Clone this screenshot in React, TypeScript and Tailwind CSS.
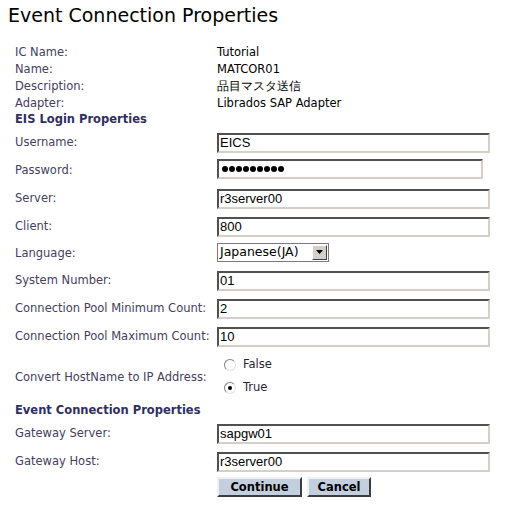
import React from 'react';

const labelFont = "font-['DejaVu_Sans','Verdana',sans-serif]";
const inputFont = "font-['Liberation_Sans','Arial',sans-serif]";

const infoRows = [
  { label: 'IC Name:', value: 'Tutorial' },
  { label: 'Name:', value: 'MATCOR01' },
  { label: 'Description:', value: '品目マスタ送信' },
  { label: 'Adapter:', value: 'Librados SAP Adapter' },
];

function TextBox({ value }: { value: string }) {
  return (
    <input
      readOnly
      defaultValue={value}
      className={`w-[273px] h-[20px] border-2 border-t-[#505050] border-l-[#505050] border-b-[#d4d0c8] border-r-[#d4d0c8] bg-white pl-[1px] text-[13px] text-black outline-none ${inputFont}`}
    />
  );
}

function PasswordBox() {
  return (
    <div className="w-[266px] h-[20px] border-2 border-t-[#505050] border-l-[#505050] border-b-[#d4d0c8] border-r-[#d4d0c8] bg-white flex items-center gap-[1px] pl-[3px]">
      {Array.from({ length: 9 }).map((_, i) => (
        <span key={i} className="w-[6px] h-[6px] rounded-full bg-black" />
      ))}
    </div>
  );
}

function LanguageSelect() {
  return (
    <div className="w-[112px] h-[19px] border border-[#7a7a7a] bg-white flex items-center justify-between">
      <span className={`pl-[2px] text-[12.5px] text-black ${labelFont}`}>Japanese(JA)</span>
      <span className="w-[15px] h-[15px] mr-[1px] bg-[#d4d0c8] border border-t-white border-l-white border-b-[#404040] border-r-[#404040] flex items-center justify-center">
        <svg width="7" height="4" viewBox="0 0 7 4">
          <path d="M0 0 L7 0 L3.5 4 Z" fill="#000" />
        </svg>
      </span>
    </div>
  );
}

function Radio({ checked, label }: { checked: boolean; label: string }) {
  return (
    <div className="h-[23px] flex items-center pl-[7px] gap-[7px]">
      <span className="w-[12px] h-[12px] rounded-full border border-t-[#808080] border-l-[#808080] border-b-[#e4e2dc] border-r-[#e4e2dc] bg-white flex items-center justify-center">
        {checked && <span className="w-[4px] h-[4px] rounded-full bg-black" />}
      </span>
      <span className={`pt-[1px] text-[11.5px] text-[#2a1d3d] ${labelFont}`}>{label}</span>
    </div>
  );
}

function Row({ label, children, h = 'h-[28px]' }: { label: string; children: React.ReactNode; h?: string }) {
  return (
    <div className={`flex items-center ${h}`}>
      <div className={`w-[202px] pt-[3px] text-[11.5px] text-[#45405e] ${labelFont}`}>{label}</div>
      <div>{children}</div>
    </div>
  );
}

function Button({ children, w }: { children: React.ReactNode; w: string }) {
  return (
    <button
      className={`${w} h-[20px] bg-[#c3cfdf] border-2 border-t-[#eef2f7] border-l-[#eef2f7] border-b-[#3c3c3c] border-r-[#3c3c3c] text-[11.5px] font-bold text-black ${labelFont}`}
    >
      {children}
    </button>
  );
}

export default function App() {
  return (
    <div className="w-[511px] h-[511px] bg-white px-[8px] overflow-hidden">
      <h1 className={`h-[44px] pt-[3px] text-[19px] text-black leading-[24px] ${labelFont}`}>
        Event Connection Properties
      </h1>

      <div className="ml-[7px]">
        {infoRows.map((r) => (
          <div key={r.label} className="flex items-center h-[17px]">
            <div className={`w-[202px] text-[11.5px] text-[#45405e] ${labelFont}`}>{r.label}</div>
            <div className={`text-[11.5px] text-black ${labelFont}`}>{r.value}</div>
          </div>
        ))}

        <div className={`h-[15px] pt-[1px] flex items-center text-[11.5px] font-bold text-[#2f2f5f] ${labelFont}`}>
          EIS Login Properties
        </div>

        <Row label="Username:"><TextBox value="EICS" /></Row>
        <Row label="Password:"><PasswordBox /></Row>
        <Row label="Server:"><TextBox value="r3server00" /></Row>
        <Row label="Client:"><TextBox value="800" /></Row>
        <Row label="Language:" h="h-[26px]"><LanguageSelect /></Row>
        <Row label="System Number:"><TextBox value="01" /></Row>
        <Row label="Connection Pool Minimum Count:"><TextBox value="2" /></Row>
        <Row label="Connection Pool Maximum Count:"><TextBox value="10" /></Row>
        <Row label="Convert HostName to IP Address:" h="h-[54px]">
          <div className="py-[4px]">
            <Radio checked={false} label="False" />
            <Radio checked label="True" />
          </div>
        </Row>

        <div className={`h-[15px] pt-[1px] flex items-center text-[11.5px] font-bold text-[#2f2f5f] ${labelFont}`}>
          Event Connection Properties
        </div>

        <Row label="Gateway Server:"><TextBox value="sapgw01" /></Row>
        <Row label="Gateway Host:"><TextBox value="r3server00" /></Row>

        <div className="flex pl-[202px] pt-[3px] gap-[5px]">
          <Button w="w-[85px]">Continue</Button>
          <Button w="w-[64px]">Cancel</Button>
        </div>
      </div>
    </div>
  );
}
